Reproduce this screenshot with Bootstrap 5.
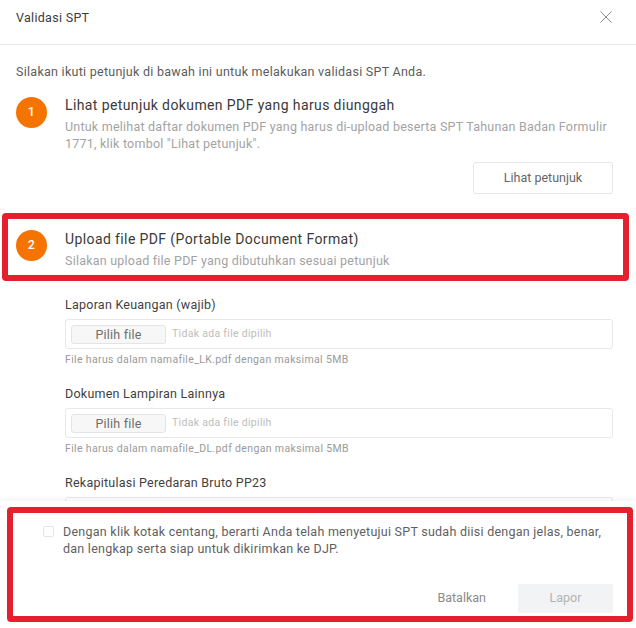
<!DOCTYPE html>
<html lang="id">
<head>
<meta charset="utf-8">
<title>Validasi SPT</title>
<link href="https://cdn.jsdelivr.net/npm/bootstrap@5.3.0/dist/css/bootstrap.min.css" rel="stylesheet">
<style>
html,body{height:100%;overflow:hidden;background:#fff}
body{font-family:Roboto,"Liberation Sans",sans-serif;color:#4f4f4f;position:relative;letter-spacing:.27px;font-size:12.5px}
.dlg{height:628px;width:636px}
.dlg-head{height:45px;padding:0 24px 10px 16px;border-bottom:1px solid #e8e8e8;flex:none}
.dlg-title{font-size:12.5px;font-weight:400;color:#3c3c3c;line-height:17px;letter-spacing:.3px}
.dlg-x{width:18px;height:18px;color:#8c8c8c;margin-right:-3px}
.dlg-body{flex:1 1 auto;min-height:0;overflow:hidden;padding:18px 23px 0 16px}
.intro{line-height:17px;color:#5c5c5c;margin-bottom:17px}
.step-num{width:31px;height:31px;border-radius:50%;background:#f57400;color:#fff;font-weight:500;font-size:12.5px;flex:none;margin-right:18px}
.step-title{font-size:14px;color:#3a3a3a;line-height:17px;margin-bottom:4px;letter-spacing:.39px;font-weight:400}
.step-desc{color:#a3a3a3;line-height:17px;margin:0;font-size:12.5px;letter-spacing:.22px}
.guide-row{margin-top:10px}
.btn-guide{width:140px;height:32px;background:#fff;border:1px solid #e6e6e6;color:#666;font-size:12.5px;padding:0;border-radius:3px;letter-spacing:0}
.step-two{margin-top:36px}
.step-two .step-title{margin-top:1px}
.fields{padding-left:49px;margin-top:27px}
.fld{margin-bottom:18px}
.fld-label{display:block;font-size:12.5px;color:#3f3f3f;line-height:17px;margin-bottom:6px;letter-spacing:.24px}
.fld-box{height:30px;padding:0 5px;border:1px solid #e8e8e8;border-radius:3px;gap:6px}
.fld-pick{width:95px;height:19px;background:#f7f7f7;border:1px solid #e4e4e4;border-radius:3px;color:#6e6e6e;font-size:12.5px;padding:0;line-height:17px;letter-spacing:.2px}
.fld-none{color:#bdbdbd;font-size:10.5px;letter-spacing:.3px}
.fld-hint{color:#9a9a9a;font-size:10.5px;line-height:14px;margin-top:4px;letter-spacing:.35px}
.dlg-foot{height:127px;flex:none;background:#fff;box-shadow:0 -2px 5px rgba(0,0,0,.05);padding:22px 23px 15px 43px;position:relative}
.agree{gap:9px}
.agree-box{width:11px;height:11px;border:1px solid #e4e4e4;border-radius:2px;margin:3px 0 0;flex:none;background:#fff;appearance:none}
.agree-text{line-height:17px;color:#5f5f5f;margin:0;font-size:12.5px;letter-spacing:.25px}
.btn-cancel{color:#8a8a8a;font-size:12.5px;padding:0;border:0;background:none;letter-spacing:0}
.btn-lapor{width:95px;height:29px;background:#f1f3f5;color:#b3b3b3;border:0;border-radius:2px;font-size:12.5px;padding:0;letter-spacing:0;opacity:1}
.gap-foot{gap:32px}
.anno{position:absolute;border:6px solid #e5202e;border-radius:4px;pointer-events:none}
.anno-a{left:2px;top:213px;width:627px;height:68px}
.anno-b{left:7px;top:507px;width:626px;height:115px}
</style>
</head>
<body>
<div class="dlg d-flex flex-column">
  <div class="dlg-head d-flex align-items-center justify-content-between">
    <h5 class="dlg-title m-0">Validasi SPT</h5>
    <svg class="dlg-x" viewBox="0 0 18 18" fill="none" stroke="currentColor" stroke-width="1"><path d="M3.5 3.5l11 11M14.5 3.5l-11 11"/></svg>
  </div>
  <div class="dlg-body">
    <p class="intro">Silakan ikuti petunjuk di bawah ini untuk melakukan validasi SPT Anda.</p>
    <div class="d-flex">
      <div class="step-num d-flex align-items-center justify-content-center">1</div>
      <div class="flex-grow-1">
        <div class="step-title">Lihat petunjuk dokumen PDF yang harus diunggah</div>
        <p class="step-desc">Untuk melihat daftar dokumen PDF yang harus di-upload beserta SPT Tahunan Badan Formulir 1771, klik tombol "Lihat petunjuk".</p>
        <div class="d-flex justify-content-end guide-row">
          <button type="button" class="btn btn-guide">Lihat petunjuk</button>
        </div>
      </div>
    </div>
    <div class="d-flex step-two">
      <div class="step-num d-flex align-items-center justify-content-center">2</div>
      <div class="flex-grow-1">
        <div class="step-title">Upload file PDF (Portable Document Format)</div>
        <p class="step-desc">Silakan upload file PDF yang dibutuhkan sesuai petunjuk</p>
      </div>
    </div>
    <div class="fields">
      <div class="fld">
        <label class="fld-label">Laporan Keuangan (wajib)</label>
        <div class="fld-box d-flex align-items-center"><button type="button" class="btn fld-pick">Pilih file</button><span class="fld-none">Tidak ada file dipilih</span></div>
        <div class="fld-hint">File harus dalam namafile_LK.pdf dengan maksimal 5MB</div>
      </div>
      <div class="fld">
        <label class="fld-label">Dokumen Lampiran Lainnya</label>
        <div class="fld-box d-flex align-items-center"><button type="button" class="btn fld-pick">Pilih file</button><span class="fld-none">Tidak ada file dipilih</span></div>
        <div class="fld-hint">File harus dalam namafile_DL.pdf dengan maksimal 5MB</div>
      </div>
      <div class="fld">
        <label class="fld-label">Rekapitulasi Peredaran Bruto PP23</label>
        <div class="fld-box"></div>
      </div>
    </div>
  </div>
  <div class="dlg-foot d-flex flex-column justify-content-between">
    <div class="d-flex agree">
      <input type="checkbox" class="agree-box" aria-label="Setuju">
      <p class="agree-text">Dengan klik kotak centang, berarti Anda telah menyetujui SPT sudah diisi dengan jelas, benar, dan lengkap serta siap untuk dikirimkan ke DJP.</p>
    </div>
    <div class="d-flex justify-content-end align-items-center gap-foot">
      <button type="button" class="btn btn-cancel">Batalkan</button>
      <button type="button" class="btn btn-lapor">Lapor</button>
    </div>
  </div>
</div>
<div class="anno anno-a"></div>
<div class="anno anno-b"></div>
</body>
</html>
